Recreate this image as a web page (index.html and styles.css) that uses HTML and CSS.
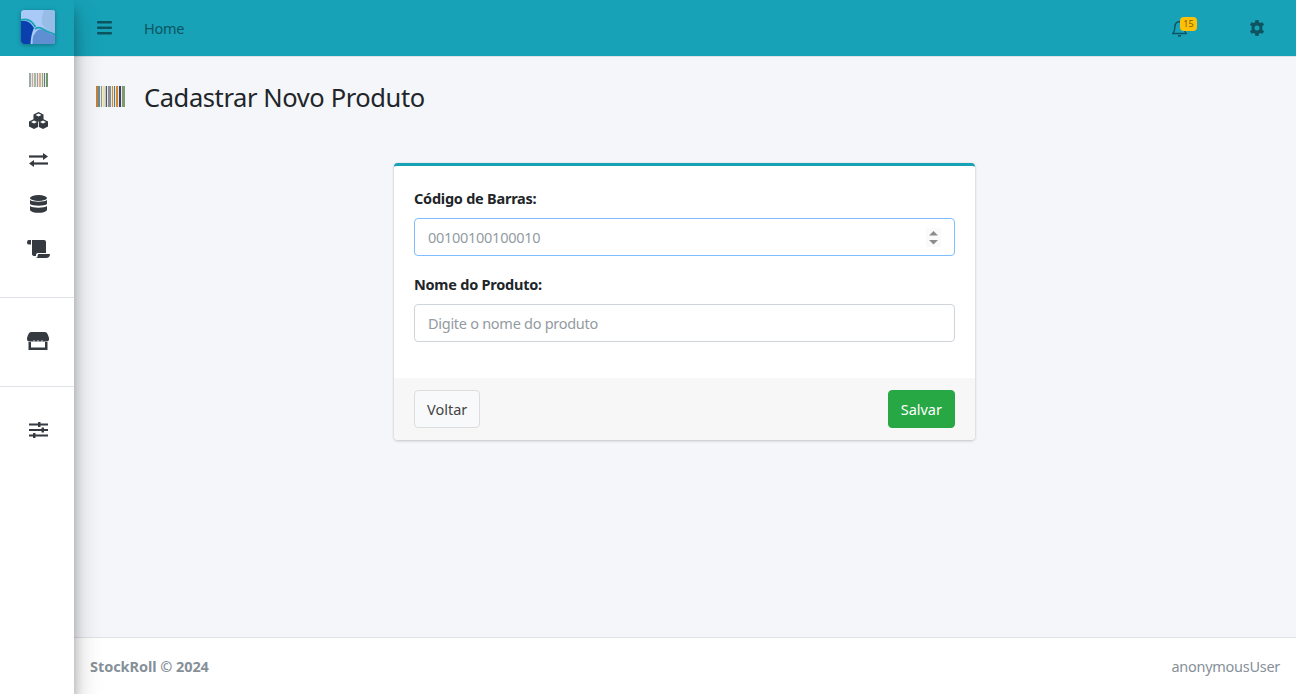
FILE: index.html
```html
<!DOCTYPE html>
<html lang="en">
<head>
  <meta charset="UTF-8">
  <meta name="viewport" content="width=device-width, initial-scale=1.0">
  <title>Cadastrar Novo Produto</title>
  <link rel="stylesheet" href="styles.css">
</head>
<body>

<div class="wrapper">

  <!-- Sidebar -->
  <aside class="sidebar">
    <div class="brand">
      <svg class="logo" width="34" height="34" viewBox="0 0 34 34">
        <rect width="34" height="34" rx="3" fill="#a9c9f7"/>
        <path d="M23 0H31a3 3 0 0 1 3 3V24Q26 22 21 14Q20 8 23 0Z" fill="#97bde6"/>
        <path d="M0 11Q8 9 13 18Q10 24 9.500 34H3a3 3 0 0 1-3-3Z" fill="#0a3fae"/>
        <path d="M11.500 34Q11 24 17 20Q20 18 24 21Q29 24 34 25V31a3 3 0 0 1-3 3Z" fill="#5f8ed3"/>
        <path d="M0 10Q9 7 14.500 17M14 19Q17 17 20 18Q26 22 34 24.500" fill="none" stroke="#17a2b8" stroke-width="1.800"/>
      </svg>
    </div>
    <nav class="side-group">
      <a class="side-link">
        <svg width="19" height="14" viewBox="0 0 19 14">
          <rect width="19" height="14" fill="#ece8dc"/>
          <rect x="0" width="2" height="14" fill="#a0a8b0"/>
          <rect x="3" width="1" height="14" fill="#c0a8b8"/>
          <rect x="5" width="2" height="14" fill="#a8b898"/>
          <rect x="8" width="1" height="14" fill="#9a9cb0"/>
          <rect x="10" width="2" height="14" fill="#d0b098"/>
          <rect x="13" width="1" height="14" fill="#8aa890"/>
          <rect x="15" width="1" height="14" fill="#6f7484"/>
          <rect x="17" width="2" height="14" fill="#6f9a6f"/>
        </svg>
      </a>
      <a class="side-link">
        <svg width="19" height="17" viewBox="0 0 19 17" fill="#343a40">
          <path d="M9.500 0 14.500 2.500V8L9.500 10.500 4.500 8V2.500Z"/>
          <path d="M5 7 10 9.500V14.500L5 17 0 14.500V9.500Z"/>
          <path d="M14 7 19 9.500V14.500L14 17 9 14.500V9.500Z"/>
          <path d="M9.500 1.500 12.500 3 9.500 4.500 6.500 3ZM5 8.500 8 10 5 11.500 2 10ZM14 8.500 17 10 14 11.500 11 10Z" fill="#fff"/>
          <path d="M9.500 9.500V17" stroke="#fff" stroke-width=".8"/>
        </svg>
      </a>
      <a class="side-link">
        <svg width="19" height="14" viewBox="0 0 19 14" fill="#343a40">
          <rect x="0" y="2.400" width="15" height="2.200"/>
          <path d="M14 0 19 3.500 14 7Z"/>
          <rect x="4" y="9.400" width="15" height="2.200"/>
          <path d="M5 7 0 10.500 5 14Z"/>
        </svg>
      </a>
      <a class="side-link tall">
        <svg width="17" height="18" viewBox="0 0 17 18" fill="#343a40">
          <ellipse cx="8.500" cy="3" rx="8.500" ry="3"/>
          <path d="M0 5C2 7.300 15 7.300 17 5V9C15 11.300 2 11.300 0 9Z"/>
          <path d="M0 11C2 13.300 15 13.300 17 11V15C15 18.800 2 18.800 0 15Z"/>
        </svg>
      </a>
      <a class="side-link">
        <svg width="23" height="19" viewBox="0 0 23 19" fill="#343a40">
          <path d="M1.500 1H4V5.500H1.500Q0 5.500 0 3.500 0 1 1.500 1Z"/>
          <path d="M5 1H17Q19 1 19 3V14H11Q9 14 9 16V17H8Q5 17 5 15Z"/>
          <path d="M11 15H23Q23 19 19 19H9Q11 18 11 15Z"/>
        </svg>
      </a>
    </nav>
    <nav class="side-group">
      <a class="side-link">
        <svg width="22" height="18" viewBox="0 0 22 18" fill="#343a40">
          <path d="M4 0H18Q20 0 21 3L22 6V7Q22 9.500 19.500 9.500H2.500Q0 9.500 0 7V6L1 3Q2 0 4 0Z"/>
          <path d="M6.500 8.200H7.500V9.500H6.500ZM10.500 8.200H11.500V9.500H10.500ZM14.500 8.200H15.500V9.500H14.500Z" fill="#fff"/>
          <path d="M1.500 10H4V15.500H18V10H20.500V18H1.500Z"/>
        </svg>
      </a>
    </nav>
    <nav class="side-group">
      <a class="side-link">
        <svg width="19" height="16" viewBox="0 0 19 16" fill="#343a40">
          <rect y="1.500" width="19" height="2"/><rect x="9" y="0" width="2.500" height="5" rx=".5"/>
          <rect y="7" width="19" height="2"/><rect x="12.500" y="5.500" width="2.500" height="5" rx=".5"/>
          <rect y="12.500" width="19" height="2"/><rect x="4" y="11" width="2.500" height="5" rx=".5"/>
        </svg>
      </a>
    </nav>
  </aside>

  <div class="main">

    <!-- Top bar -->
    <header class="topbar">
      <svg class="burger" width="15" height="14" viewBox="0 0 15 14" fill="#0d5460">
        <rect y="0" width="15" height="2.500" rx="1"/>
        <rect y="5.500" width="15" height="2.500" rx="1"/>
        <rect y="11" width="15" height="2.500" rx="1"/>
      </svg>
      <a class="home-link">Home</a>
      <div class="topbar-right">
        <div class="bell">
          <svg width="15" height="17" viewBox="0 0 15 17" fill="none" stroke="#0d5460" stroke-width="1.400">
            <path d="M.8 13.500Q2.800 11.500 2.800 7.500 2.800 2 7.500 1.500 12.200 2 12.200 7.500 12.200 11.500 14.200 13.500Z"/>
            <path d="M6 15.800H9" stroke-width="1.600"/>
          </svg>
          <span class="badge">15</span>
        </div>
        <svg class="gear" width="16" height="16" viewBox="0 0 16 16">
          <path fill="#0d5460" fill-rule="evenodd" d="M6.500 0H9.500L10 2.300 11.300 3 13.500 2.200 15 4.800 13.300 6.300V9.700L15 11.200 13.500 13.800 11.300 13 10 13.700 9.500 16H6.500L6 13.700 4.700 13 2.500 13.800 1 11.200 2.700 9.700V6.300L1 4.800 2.500 2.200 4.700 3 6 2.300ZM8 5.500A2.500 2.500 0 1 0 8 10.500 2.500 2.500 0 1 0 8 5.500Z"/>
        </svg>
      </div>
    </header>

    <!-- Content -->
    <main class="content">
      <div class="page-head">
        <svg width="29" height="21" viewBox="0 0 29 21">
          <rect width="29" height="21" fill="#e8ecd8"/>
          <rect x="0" width="2" height="21" fill="#c8813a"/>
          <rect x="2" width="2" height="21" fill="#5f8f9a"/>
          <rect x="5" width="1" height="21" fill="#9a8fa8"/>
          <rect x="7" width="2" height="21" fill="#e8dfa0"/>
          <rect x="9" width="1" height="21" fill="#b8c8e0"/>
          <rect x="10" width="1" height="21" fill="#4a4f80"/>
          <rect x="12" width="3" height="21" fill="#8a8d96"/>
          <rect x="16" width="1" height="21" fill="#d08a3a"/>
          <rect x="18" width="1" height="21" fill="#3f7fb0"/>
          <rect x="20" width="2" height="21" fill="#d9852f"/>
          <rect x="23" width="2" height="21" fill="#3a3f70"/>
          <rect x="26" width="3" height="21" fill="#7f9a70"/>
        </svg>
        <h1>Cadastrar Novo Produto</h1>
      </div>

      <form class="card">
        <div class="card-body">
          <div class="field">
            <label for="barcode">Código de Barras:</label>
            <div class="input focused" id="barcode">
              <span class="placeholder">00100100100010</span>
              <svg class="spin" width="15" height="19" viewBox="0 0 15 19" fill="#8c8c8c">
                <rect width="15" height="19" fill="#fafafa"/>
                <path d="M7.500 3 12 7.500H3Z"/>
                <path d="M3 12H12L7.500 16.500Z"/>
              </svg>
            </div>
          </div>
          <div class="field">
            <label for="nome">Nome do Produto:</label>
            <div class="input" id="nome">
              <span class="placeholder">Digite o nome do produto</span>
            </div>
          </div>
        </div>
        <div class="card-footer">
          <button type="button" class="btn btn-light">Voltar</button>
          <button type="button" class="btn btn-green">Salvar</button>
        </div>
      </form>
    </main>

    <footer class="footer">
      <strong>StockRoll © 2024</strong>
      <span>anonymousUser</span>
    </footer>

  </div>
</div>

</body>
</html>
```

FILE: styles.css
```css
* {
  box-sizing: border-box;
}
body {
  margin: 0;
  font-family: "Noto Sans", Arial, sans-serif;
  font-size: 14.5px;
  letter-spacing: -.28px;
  color: #212529;
  background: #f4f6f9;
  overflow: hidden;
}
.wrapper {
  display: flex;
  height: 694px;
}
.sidebar {
  width: 74px;
  flex: none;
  background: #fff;
  box-shadow: 0 14px 28px rgba(0, 0, 0, .25), 0 10px 10px rgba(0, 0, 0, .22);
  position: relative;
  z-index: 5;
}
.brand {
  height: 56px;
  background: #17a2b8;
  display: flex;
  justify-content: center;
  padding: 10px 0 0 1px;
}
.logo {
  filter: drop-shadow(0 1px 2px rgba(0, 0, 0, .3));
}
.side-group {
  display: flex;
  flex-direction: column;
  align-items: center;
  height: 89px;
  padding: 23px 0 0 2px;
  border-bottom: 1px solid #dee2e6;
}
.side-group:first-of-type {
  height: 242px;
  padding-top: 4px;
}
.side-group:last-of-type {
  border-bottom: none;
}
.side-link {
  height: 40px;
  display: flex;
  align-items: center;
  justify-content: center;
}
.side-link.tall {
  height: 48px;
}
.main {
  flex: 1;
  display: flex;
  flex-direction: column;
  min-width: 0;
}
.topbar {
  height: 57px;
  flex: none;
  background: #17a2b8;
  border-bottom: 1px solid #dee2e6;
  display: flex;
  align-items: center;
  padding-left: 23px;
}
.burger {
  margin-right: 32px;
}
.home-link {
  color: #0d5460;
}
.topbar-right {
  margin-left: auto;
  display: flex;
  align-items: center;
  gap: 62px;
  padding-right: 31px;
}
.bell {
  position: relative;
  display: flex;
}
.badge {
  position: absolute;
  top: -3px;
  left: 8px;
  width: 17px;
  height: 14px;
  line-height: 14px;
  border-radius: 4px;
  background: #ffc107;
  color: #7a5c00;
  font-size: 9px;
  letter-spacing: 0;
  text-align: center;
}
.content {
  flex: 1;
  min-height: 0;
  padding-right: 1px;
}
.page-head {
  display: flex;
  align-items: flex-start;
  gap: 19px;
  padding: 23px 0 0 22px;
  height: 106px;
}
.page-head svg {
  margin-top: 6px;
}
h1 {
  margin: 0;
  font-size: 25.5px;
  font-weight: 400;
  letter-spacing: -.4px;
  line-height: 34px;
}
.card {
  width: 581px;
  margin: 0 auto;
  background: #fff;
  border-top: 3px solid #17a2b8;
  border-radius: 4px;
  box-shadow: 0 0 1px rgba(0, 0, 0, .125), 0 1px 3px rgba(0, 0, 0, .2);
  overflow: hidden;
}
.card-body {
  padding: 20px 20px 36px;
}
.field + .field {
  margin-top: 16px;
}
label {
  display: block;
  font-weight: 700;
  letter-spacing: -.24px;
  line-height: 24px;
  margin-bottom: 8px;
  color: #212529;
}
.input {
  height: 38px;
  border: 1px solid #ced4da;
  border-radius: 4px;
  display: flex;
  align-items: center;
  justify-content: space-between;
  padding: 0 13px 0 13px;
}
.input.focused {
  border-color: #80bdff;
}
.placeholder {
  color: #939ba2;
}
.card-footer {
  height: 62px;
  background: #f7f7f7;
  display: flex;
  align-items: center;
  justify-content: space-between;
  padding: 0 20px;
}
.btn {
  height: 38px;
  padding: 0 12px;
  border-radius: 4px;
  font-family: inherit;
  font-size: 14.5px;
}
.btn-light {
  background: #f8f9fa;
  border: 1px solid #ddd;
  color: #444;
}
.btn-green {
  background: #28a745;
  border: 1px solid #28a745;
  color: #fff;
}
.footer {
  height: 57px;
  flex: none;
  background: #fff;
  border-top: 1px solid #dee2e6;
  color: #869099;
  display: flex;
  align-items: center;
  justify-content: space-between;
  padding: 0 16px;
}
.footer strong {
  letter-spacing: -.06px;
}
```
